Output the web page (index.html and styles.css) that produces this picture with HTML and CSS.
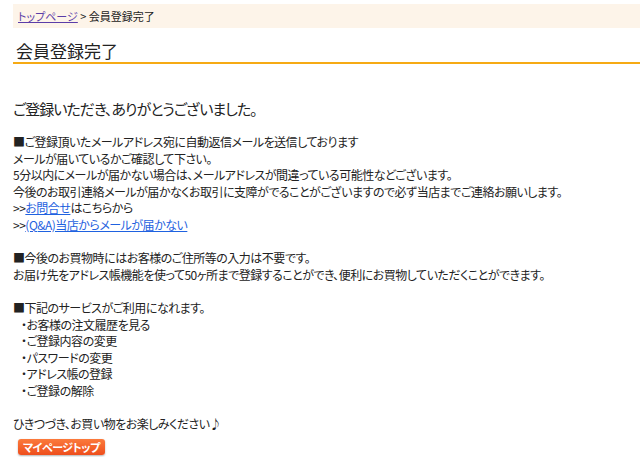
FILE: index.html
```html
<!DOCTYPE html>
<html lang="ja">
<head>
  <meta charset="UTF-8">
  <title>会員登録完了</title>
  <link rel="stylesheet" href="styles.css">
</head>
<body>
  <div class="page">
    <div class="breadcrumb">
      <a href="#" class="visited">トップページ</a> &gt; 会員登録完了
    </div>

    <h1 class="page-title">会員登録完了</h1>

    <p class="thanks">ご登録いただき、ありがとうございました。</p>

    <div class="message">
      ■ご登録頂いたメールアドレス宛に自動返信メールを送信しております<br>
      メールが届いているかご確認して下さい。<br>
      5分以内にメールが届かない場合は、メールアドレスが間違っている可能性などございます。<br>
      今後のお取引連絡メールが届かなくお取引に支障がでることがございますので必ず当店までご連絡お願いします。<br>
      &gt;&gt;<a href="#">お問合せ</a>はこちらから<br>
      &gt;&gt;<a href="#">(Q&amp;A)当店からメールが届かない</a><br>
      <br>
      ■今後のお買物時にはお客様のご住所等の入力は不要です。<br>
      お届け先をアドレス帳機能を使って50ヶ所まで登録することができ、便利にお買物していただくことができます。<br>
      <br>
      ■下記のサービスがご利用になれます。<br>
      <span class="item">・お客様の注文履歴を見る</span><br>
      <span class="item">・ご登録内容の変更</span><br>
      <span class="item">・パスワードの変更</span><br>
      <span class="item">・アドレス帳の登録</span><br>
      <span class="item">・ご登録の解除</span><br>
      <br>
      ひきつづき、お買い物をお楽しみください♪
    </div>

    <a href="#" class="btn-mypage">マイページトップ</a>
  </div>
</body>
</html>
```

FILE: styles.css
```css
body {
  margin: 0;
  font-family: "Noto Sans CJK JP", "DejaVu Sans", sans-serif;
  font-feature-settings: "palt";
  color: #222;
  background-color: #fff;
}
.page {
  margin-left: 13px;
  padding-top: 4px;
}
.breadcrumb {
  background-color: #fdf4e9;
  height: 24px;
  line-height: 24px;
  padding-left: 5px;
  font-size: 11px;
}
.breadcrumb a.visited {
  color: #5b3da8;
}
.page-title {
  margin: 12px 0 0;
  padding: 0 0 0 3px;
  font-size: 17px;
  font-weight: normal;
  line-height: 22px;
  border-bottom: 2px solid #f6aa14;
}
.thanks {
  margin: 34px 0 0;
  font-size: 15px;
  line-height: 22px;
  letter-spacing: -1px;
}
.message {
  margin-top: 14px;
  font-size: 12px;
  line-height: 16.6px;
  letter-spacing: -0.5px;
}
.message a {
  color: #1f62e0;
}
.item {
  padding-left: 8px;
}
.btn-mypage {
  display: inline-block;
  margin: 1px 0 0 5px;
  padding: 0 5px;
  height: 16px;
  line-height: 16px;
  font-size: 11px;
  font-weight: bold;
  letter-spacing: -0.5px;
  color: #fff;
  text-decoration: none;
  background: linear-gradient(#fb7a3c, #ee4e1c);
  border-radius: 3px;
  box-shadow: 0 1px 2px rgba(0, 0, 0, 0.3);
}
```
